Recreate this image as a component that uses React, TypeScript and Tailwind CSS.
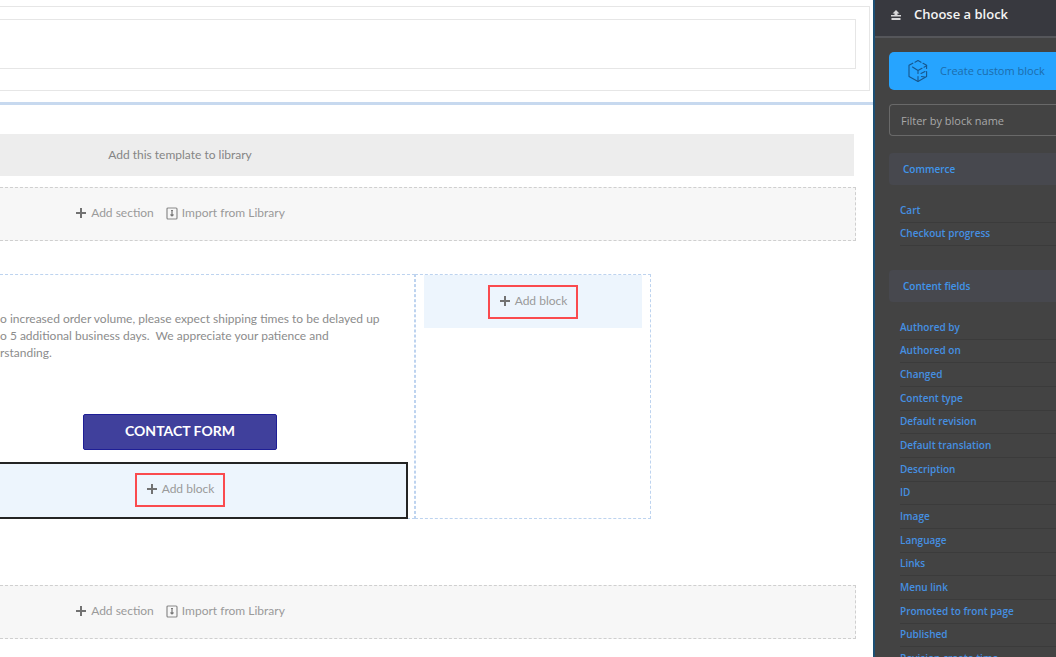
const contentFields = [
  "Authored by",
  "Authored on",
  "Changed",
  "Content type",
  "Default revision",
  "Default translation",
  "Description",
  "ID",
  "Image",
  "Language",
  "Links",
  "Menu link",
  "Promoted to front page",
  "Published",
  "Revision create time",
];

function PlusIcon() {
  return (
    <svg viewBox="0 0 12 12" className="h-3 w-3 shrink-0" aria-hidden="true">
      <path d="M6 1v10M1 6h10" stroke="#727272" strokeWidth="2" fill="none" />
    </svg>
  );
}

function ImportIcon() {
  return (
    <svg viewBox="0 0 12 13" className="h-[13px] w-3 shrink-0" aria-hidden="true">
      <rect x="1" y="1" width="10" height="11" rx="1" stroke="#8a8a8a" strokeWidth="1.2" fill="none" />
      <path d="M6 3v6M4.500 7.500 6 9l1.500-1.500M5 3.500h2" stroke="#777" strokeWidth="1.200" fill="none" />
    </svg>
  );
}

function CubeIcon() {
  return (
    <svg viewBox="0 0 22 24" className="h-6 w-[22px] shrink-0" fill="none" stroke="#17568c" strokeWidth="1.100" strokeLinecap="round" strokeLinejoin="round" aria-hidden="true">
      <path d="M8 3.200 11 1.600l3 1.600M16 4.300l3.600 2v3.200M19.600 12.500v5L11 22.400 2 17.500V6.300L5.800 4.200" />
      <path d="m5.500 8 5.500 3.500v3M11 11.500l4-2.200M17 8.200l2.600-1.600M11 17.500v4.500M14 14.500l4-2M14.500 17.500l3 .500" />
    </svg>
  );
}

function SectionBar() {
  return (
    <div className="mr-[17px] flex h-[54px] items-center border-y border-r border-dashed border-[#cfcfcf] bg-[#f7f7f7] pb-[2px]">
      <div className="flex w-[360px] justify-center gap-3 text-xs text-[#9a9a9a]">
        <button className="flex items-center gap-1">
          <PlusIcon />
          Add section
        </button>
        <button className="flex items-center gap-1">
          <ImportIcon />
          Import from Library
        </button>
      </div>
    </div>
  );
}

function AddBlock() {
  return (
    <button className="flex h-[34px] w-[90px] items-center justify-center gap-1 border-2 border-[#fa4a4e] pb-[2px] text-xs text-[#9a9a9a]">
      <PlusIcon />
      Add block
    </button>
  );
}

function BlockGroup({ title }: { title: string }) {
  return (
    <h2 className="flex h-8 items-center rounded-l-sm bg-[#47484e] pl-[14px] text-[10px] font-semibold text-[#4095ea]">
      {title}
    </h2>
  );
}

function BlockLink({ name }: { name: string }) {
  return (
    <li className="flex items-center border-b border-[#3b3b3b]">
      <a href="#" className="whitespace-nowrap">
        {name}
      </a>
    </li>
  );
}

export default function App() {
  return (
    <div className="flex h-screen overflow-hidden bg-white">
      <main className="min-w-0 flex-1 overflow-hidden font-['Lato',sans-serif]">
        <header className="border-b-[3px] border-[#c7d9ef] pt-[6px] pb-[11px]">
          <div className="mr-[3px] border-y border-r border-[#e6e6e6] py-3">
            <div className="mr-[13px] h-[50px] border-y border-r border-[#e6e6e6]" />
            <div className="h-[9px]" />
          </div>
        </header>

        <div className="mt-[29px] mr-[19px] flex h-[42px] items-center bg-[#ededed]">
          <button className="w-[360px] text-center text-xs text-[#858585]">Add this template to library</button>
        </div>

        <div className="mt-[11px]">
          <SectionBar />
        </div>

        <section className="mt-[33px] flex h-[245px]">
          <div className="flex w-[415px] flex-col border-y border-r border-dashed border-[#bdd3ef]">
            <p className="mt-[35px] text-xs leading-[17px] whitespace-pre text-[#8c8c8c]">
              {"o increased order volume, please expect shipping times to be delayed up\no 5 additional business days.  We appreciate your patience and\nrstanding."}
            </p>
            <div className="mt-[53px] flex w-[360px] justify-center">
              <button className="h-9 w-[194px] rounded-xs border border-[#1e1e96] bg-[#40409c] pb-[2px] text-sm font-bold text-white">
                CONTACT FORM
              </button>
            </div>
            <div className="mt-auto -mb-px mr-[6px] flex h-[57px] shrink-0 items-center border-y-2 border-r-2 border-[#242424] bg-[#edf5fd] pb-[2px]">
              <div className="flex w-[360px] justify-center">
                <AddBlock />
              </div>
            </div>
          </div>
          <div className="w-[236px] border border-dashed border-[#bdd3ef] px-2">
            <div className="flex h-[53px] items-center justify-center bg-[#edf5fd]">
              <AddBlock />
            </div>
          </div>
        </section>

        <div className="mt-[66px]">
          <SectionBar />
        </div>
      </main>

      <aside className="flex w-[183px] shrink-0 flex-col overflow-hidden border-l-2 border-[#1c4f74] bg-[#434343] font-['Open_Sans',sans-serif]">
        <header className="flex h-[38px] shrink-0 items-center gap-3 border-b-2 border-[#55565a] bg-[#38393f] pb-[6px] pl-[15px]">
          <svg viewBox="0 0 12 12" className="h-3 w-3" aria-hidden="true">
            <path d="M6 1 2.500 4.500h2v1.500H1v1.500h10V6H7.500V4.500h2zM1.500 9h9v2h-9z" fill="#d8d8da" />
          </svg>
          <h1 className="text-[13px] font-semibold whitespace-nowrap text-[#f4f4f4]">Choose a block</h1>
        </header>
        <div className="pl-[14px]">
          <button className="mt-[14px] flex h-[38px] w-full items-center gap-[11px] rounded-l-[5px] bg-[#26a4ff] pl-[18px] text-[11px] whitespace-nowrap text-[#1d6dac]">
            <CubeIcon />
            Create custom block
          </button>
          <input
            aria-label="Filter by block name"
            placeholder="Filter by block name"
            className="mt-[14px] block h-8 w-full rounded-l-sm border border-r-0 border-[#696969] bg-transparent pl-[11px] text-[11px] text-white placeholder:text-[#a8a8a8]"
          />
          <div className="mt-[17px]">
            <BlockGroup title="Commerce" />
          </div>
          <ul className="mt-[14px] ml-[11px] grid h-[47px] auto-rows-fr text-[10px] font-semibold text-[#4590e2]">
            <BlockLink name="Cart" />
            <BlockLink name="Checkout progress" />
          </ul>
          <div className="mt-[24px]">
            <BlockGroup title="Content fields" />
          </div>
          <ul className="mt-[14px] ml-[11px] grid h-[355px] auto-rows-fr text-[10px] font-semibold text-[#4590e2]">
            {contentFields.map((name) => (
              <BlockLink key={name} name={name} />
            ))}
          </ul>
        </div>
      </aside>
    </div>
  );
}
